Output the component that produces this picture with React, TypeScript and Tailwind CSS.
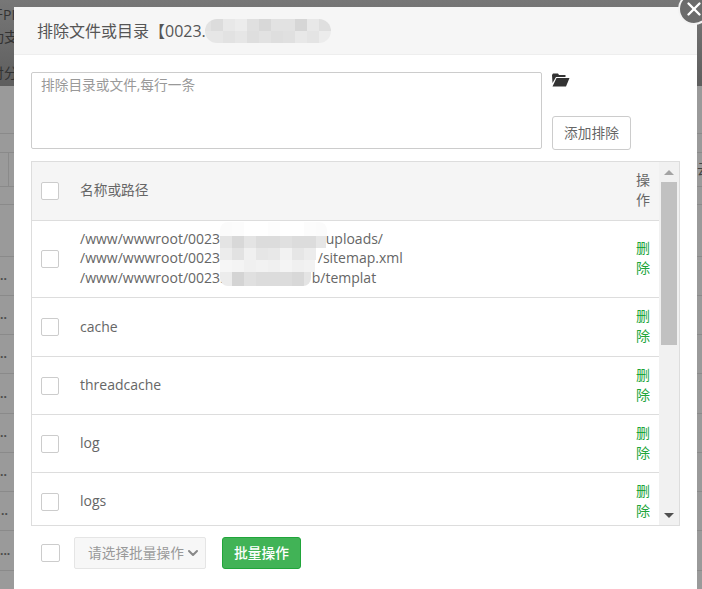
import React from 'react';
import { X, ChevronDown } from 'lucide-react';

const font = 'font-["Open_Sans","Noto_Sans_CJK_SC",sans-serif]';

// grey cells for the blurred-out parts of the screenshot
const titleCells = [
  ['w-[6px] bg-[#e2e2e2]', 'w-3 bg-[#dcdcdc]', 'w-3 bg-[#e8e8e8]', 'w-3 bg-[#ececec]', 'w-3 bg-[#e0e0e0]', 'w-3 bg-[#d8d8d8]', 'w-3 bg-[#e2e2e2]', 'w-3 bg-[#e2e2e2]', 'w-3 bg-[#d6d6d6]', 'w-3 bg-[#e8e8e8]', 'w-3 bg-[#dfdfdf]'],
  ['w-[6px] bg-[#e6e6e6]', 'w-3 bg-[#e6e6e6]', 'w-3 bg-[#e2e2e2]', 'w-3 bg-[#e6e6e6]', 'w-3 bg-[#dedede]', 'w-3 bg-[#e2e2e2]', 'w-3 bg-[#dedede]', 'w-3 bg-[#e0e0e0]', 'w-3 bg-[#e8e8e8]', 'w-3 bg-[#e4e4e4]', 'w-3 bg-[#ececec]'],
];

const pathCells = [
  { h: 'h-[14px]', w: 'w-[107px] rounded-t-[8px]', cells: ['bg-[#fbfbfb]', 'bg-[#fcfcfc]', 'bg-[#ffffff]', 'bg-[#ffffff]', 'bg-[#fdfdfd]', 'bg-[#ffffff]', 'bg-[#ffffff]', 'bg-[#fcfcfc]', 'bg-[#fbfbfb]'] },
  { h: 'h-3', w: 'w-[106px]', cells: ['bg-[#e4e4e4]', 'bg-[#d8d8d8]', 'bg-[#e4e4e4]', 'bg-[#dcdcdc]', 'bg-[#dcdcdc]', 'bg-[#e0e0e0]', 'bg-[#dcdcdc]', 'bg-[#dcdcdc]', 'bg-[#e6e6e6]'] },
  { h: 'h-3', w: 'w-[96px]', cells: ['bg-[#ececec]', 'bg-[#e2e2e2]', 'bg-[#f0f0f0]', 'bg-[#e6e6e6]', 'bg-[#e8e8e8]', 'bg-[#f2f2f2]', 'bg-[#e6e6e6]', 'bg-[#ececec]', 'bg-[#f0f0f0]'] },
  { h: 'h-3', w: 'w-[95px]', cells: ['bg-[#f6f6f6]', 'bg-[#f4f4f4]', 'bg-[#f0f0f0]', 'bg-[#f2f2f2]', 'bg-[#f0f0f0]', 'bg-[#f4f4f4]', 'bg-[#f0f0f0]', 'bg-[#f2f2f2]', 'bg-[#f4f4f4]'] },
  { h: 'h-[14px]', w: 'w-[91px] rounded-b-[8px]', cells: ['bg-[#ececec]', 'bg-[#d4d4d4]', 'bg-[#e0e0e0]', 'bg-[#dcdcdc]', 'bg-[#dcdcdc]', 'bg-[#dcdcdc]', 'bg-[#d8d8d8]', 'bg-[#e4e4e4]', 'bg-[#ececec]'] },
];

const backRows = [
  { h: 'h-[48px]', text: '', ml: '' },
  { h: 'h-[19px]', text: '', ml: '' },
  { h: 'h-[34px]', text: '', ml: '' },
  { h: 'h-[18px]', text: '', ml: '' },
  { h: 'h-[52px]', text: '', ml: '' },
  { h: 'h-[39px]', text: '..', ml: '' },
  { h: 'h-[39px]', text: '..', ml: '' },
  { h: 'h-[39px]', text: '..', ml: '' },
  { h: 'h-[40px]', text: '..', ml: '' },
  { h: 'h-[39px]', text: '..', ml: '' },
  { h: 'h-[39px]', text: '..', ml: '' },
  { h: 'h-[39px]', text: '..', ml: 'ml-[1px]' },
  { h: 'h-[40px]', text: '...', ml: '' },
];

const rows = [
  { name: 'cache', h: 'h-[59px]' },
  { name: 'threadcache', h: 'h-[58px]' },
  { name: 'log', h: 'h-[58px]' },
  { name: 'logs', h: 'h-[58px]' },
];

const Checkbox = () => (
  <span className="block w-[18px] h-[18px] shrink-0 bg-white border border-[#ccc] rounded-[2px]" />
);

const OpLink = () => (
  <a className="block w-[14px] -mt-[2px] text-[14px] leading-[20px] text-[#20a53a]">删除</a>
);

const FolderOpen = () => (
  <svg width="18" height="14" viewBox="0 0 18 14" className="block">
    <path d="M0 2 L1 0.5 H6 L7 2 H13.5 V4 H4 L0.5 10 Z" fill="#333" />
    <path d="M4.5 5 H17.5 L14 13.5 H0.5 Z" fill="#333" />
  </svg>
);

export default function App() {
  return (
    <div className={`relative w-[702px] h-[589px] overflow-hidden bg-[#9a9a9a] ${font}`}>
      {/* page behind the dialog */}
      <div className="flex flex-col text-[14px] text-[#333]">
        <div className="h-[86px] bg-gradient-to-b from-[#777777] to-[#5e5e5e] pt-[5px]">
          <div className="leading-[20px] -ml-[11px] whitespace-nowrap">开PI</div>
          <div className="leading-[20px] mt-[2px] -ml-[10px] whitespace-nowrap">功支</div>
          <div className="leading-[20px] mt-[16px] -ml-[10px] whitespace-nowrap">付分</div>
        </div>
        {backRows.map((row, i) => (
          <div
            key={i}
            className={`${row.h} relative flex items-center border-b border-[#8a8a8a] text-[12px] font-bold text-[#4a4a4a]`}
          >
            <span className={row.ml}>{row.text}</span>
            {i === 2 && (
              <>
                <span className="absolute left-[8px] top-0 bottom-0 border-l border-[#8a8a8a]" />
                <span className="absolute left-[697px] top-[6px] text-[14px] font-normal leading-[20px] text-[#444] whitespace-nowrap">
                  云
                </span>
              </>
            )}
          </div>
        ))}
      </div>

      {/* dialog */}
      <div className="absolute left-[14px] top-[7px] w-[683px] h-[582px] bg-white flex flex-col">
        <div className="h-[48px] shrink-0 flex items-center pl-[23px] bg-[#f6f6f6] border-b border-[#eeeeee] text-[16px] text-[#555]">
          <span className="whitespace-nowrap">排除文件或目录【0023.</span>
          <div className="flex flex-col -ml-[1px] rounded-[12px] overflow-hidden">
            {titleCells.map((cells, i) => (
              <div key={i} className="flex h-3">
                {cells.map((c, j) => (
                  <span key={j} className={`h-3 ${c}`} />
                ))}
              </div>
            ))}
          </div>
        </div>

        <div className="flex pl-[17px] pt-[17px] gap-[10px]">
          <div className="w-[511px] h-[77px] border border-[#ccc] rounded-[2px] px-[9px] py-[3px] text-[13.7px] leading-[18px] text-[#999]">
            排除目录或文件,每行一条
          </div>
          <div className="flex flex-col items-start">
            <div className="mt-[1px]">
              <FolderOpen />
            </div>
            <button className="mt-[29px] w-[79px] h-[34px] border border-[#ccc] rounded-[3px] bg-white text-[13.7px] text-[#666]">
              添加排除
            </button>
          </div>
        </div>

        <div className="ml-[17px] mt-[11px] w-[649px] h-[365px] border border-[#dddddd] flex overflow-hidden text-[14px] text-[#666]">
          <div className="w-[627px] shrink-0">
            <div className="h-[59px] flex items-center pl-[9px] pr-[9px] bg-[#f5f5f5] border-b border-[#dddddd]">
              <Checkbox />
              <span className="ml-[21px] flex-1 -mt-[2px] text-[13.7px]">名称或路径</span>
              <span className="block w-[14px] -mt-[2px] leading-[20px]">操作</span>
            </div>
            <div className="relative h-[77px] flex items-center pl-[9px] pr-[9px] border-b border-[#dddddd]">
              <Checkbox />
              <div className="ml-[21px] flex-1 -mt-[2px] leading-[19.5px]">
                <div className="flex">
                  <span>/www/wwwroot/0023.</span>
                  <span className="ml-[102px]">uploads/</span>
                </div>
                <div className="flex">
                  <span>/www/wwwroot/0023.</span>
                  <span className="ml-[94px]">/sitemap.xml</span>
                </div>
                <div className="flex">
                  <span>/www/wwwroot/0023.</span>
                  <span className="ml-[88px]">b/templat</span>
                </div>
              </div>
              <OpLink />
              <div className="absolute left-[188px] top-[1px] flex flex-col">
                {pathCells.map((row, i) => (
                  <div key={i} className={`flex overflow-hidden ${row.h} ${row.w}`}>
                    {row.cells.map((c, j) => (
                      <span key={j} className={`w-3 shrink-0 ${c}`} />
                    ))}
                  </div>
                ))}
              </div>
            </div>
            {rows.map((row) => (
              <div
                key={row.name}
                className={`${row.h} flex items-center pl-[9px] pr-[9px] border-b border-[#dddddd]`}
              >
                <Checkbox />
                <span className="ml-[21px] flex-1 -mt-[2px]">{row.name}</span>
                <OpLink />
              </div>
            ))}
          </div>
          <div className="flex-1 bg-[#f1f1f1] flex flex-col items-center">
            <div className="h-[20px] w-full flex items-center justify-center">
              <span className="block w-0 h-0 border-x-[5px] border-x-transparent border-b-[5px] border-b-[#a3a3a3]" />
            </div>
            <div className="w-[16px] h-[163px] bg-[#c1c1c1]" />
            <div className="mt-auto h-[20px] w-full flex items-center justify-center">
              <span className="block w-0 h-0 border-x-[5px] border-x-transparent border-t-[5px] border-t-[#505050]" />
            </div>
          </div>
        </div>

        <div className="flex items-center pl-[27px] mt-[11px]">
          <span className="block w-[19px] h-[18px] bg-white border border-[#ccc] rounded-[2px]" />
          <div className="ml-[14px] w-[132px] h-[32px] flex items-center pl-[13px] bg-[#f7f7f7] border border-[#e5e5e5] rounded-[2px] text-[13.7px] text-[#999]">
            <span className="whitespace-nowrap">请选择批量操作</span>
            <ChevronDown size={16} strokeWidth={3} className="ml-[1px] text-[#888]" />
          </div>
          <button className="ml-[16px] w-[79px] h-[32px] bg-[#41b356] border border-[#20a53a] rounded-[3px] text-[13.7px] font-medium text-white">
            批量操作
          </button>
        </div>
      </div>

      {/* close button */}
      <div className="absolute left-[678px] top-[-7px] w-[32px] h-[32px] rounded-full bg-[#6b6b6b] border-2 border-[#f2f2f2] flex items-center justify-center">
        <X size={22} strokeWidth={2.6} className="text-white" />
      </div>
    </div>
  );
}
